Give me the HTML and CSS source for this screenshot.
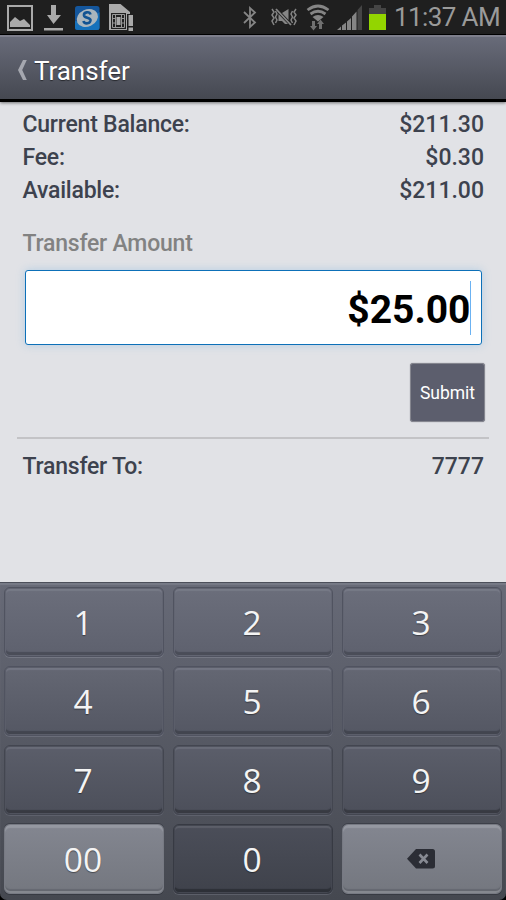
FILE: index.html
```html
<!DOCTYPE html>
<html lang="en">
<head>
<meta charset="utf-8">
<title>Transfer</title>
<link rel="stylesheet" href="styles.css">
</head>
<body>
<div class="screen">
  <div class="status">
    <svg class="status-icons" width="390" height="34" viewBox="0 0 390 34" aria-hidden="true">
      <g fill="#aaa">
        <path fill-rule="evenodd" d="M7 5H33V31H7ZM9 7V29H31V7Z"/>
        <path d="M10 27V22L15 17L20 21L24 19L30 25V27Z"/>
        <path d="M51 5H56V15H61L53.500 24L47 15H51ZM44 28H63V30.500H44Z"/>
      </g>
      <rect x="75" y="6" width="24.500" height="24" rx="2.500" fill="#14569c"/>
      <path d="M75 21Q90 23 99.500 12V27.500Q99.500 30 97 30H78Q75 30 75 27.500Z" fill="#1671bb"/>
      <ellipse cx="87.300" cy="18" rx="11" ry="8.500" fill="#aab5bd" transform="rotate(-25 87.300 18)"/>
      <path d="M90.500 14.500C89.500 11 83.500 12 84 15.500C84.500 18.500 91 17 90.500 20.500C89.500 24.500 84 24 83.500 21" fill="none" stroke="#125392" stroke-width="2.600"/>
      <path d="M109 4H120.500L130 12V14H127V30H109Z" fill="#aaa"/>
      <rect x="111" y="13" width="15" height="16" fill="#222"/>
      <path d="M112.500 14.500H124.500V27.500H112.500ZM115.500 15V27M121.500 15V27M112.500 18.500H115.500M112.500 23H115.500M121.500 18.500H124.500M121.500 23H124.500" fill="none" stroke="#999" stroke-width="1"/>
      <rect x="116.500" y="17" width="4" height="8" fill="#aaa"/>
      <path d="M128.500 15H133V26H128.500ZM128.500 27.500H133V31H128.500Z" fill="#aaa"/>
      <path d="M244 12L255 22.500L250 27V8L255 12.500L244 23" fill="none" stroke="#858585" stroke-width="1.800"/>
      <g stroke="#858585" stroke-width="1.500" fill="none">
        <path d="M272 9L274 12L272 15L274 18L272 21L274 25M275.500 11L277 14L275.500 17L277 20L275.500 23M296 9L294 12L296 15L294 18L296 21L294 25M292.500 11L291 14L292.500 17L291 20L292.500 23"/>
        <path d="M276 9L291 25" stroke-width="1.800"/>
      </g>
      <path d="M278.500 14L288 24H285L282 21H278.500ZM282 13L288.500 9V20Z" fill="#858585"/>
      <g fill="none" stroke="#858585" stroke-width="2.800">
        <path d="M307.500 10Q318 2 328.500 10M310.500 14Q318 8.500 325.500 14"/>
      </g>
      <path d="M312.500 17Q318 13 323.500 17L318 21.500Z" fill="#858585"/>
      <path d="M312 21H315V26H317L313.500 30.500L310 26H312ZM319 29V24H317L320.500 19.500L324 24H322V29Z" fill="#707070"/>
      <g fill="#858585">
        <path d="M337 30L341 26.500V30ZM342 25.500L346 22.500V30H342ZM347 21.500L351 18V30H347ZM352 16.500L356.500 11.500V30H352Z"/>
      </g>
      <path d="M357.500 10L362 5V30H357.500Z" fill="#454545"/>
      <path d="M374 5H381V8H386V15H369V8H374Z" fill="#454545"/>
      <rect x="369" y="14" width="17" height="16" fill="#93d500"/>
    </svg>
    <span class="clock">11:37 AM</span>
  </div>
  <header class="header">
    <svg width="11" height="22" viewBox="0 0 11 22" aria-hidden="true"><path d="M6 1H9.800L5.200 11L9.800 21H6L1 11Z" fill="#a5a7af"/></svg>
    <span class="title">Transfer</span>
  </header>
  <main class="content">
    <div class="row"><span>Current Balance:</span><span class="num">$211.30</span></div>
    <div class="row"><span>Fee:</span><span class="num">$0.30</span></div>
    <div class="row"><span>Available:</span><span class="num">$211.00</span></div>
    <div class="row muted">Transfer Amount</div>
    <div class="field"><span class="amount">$25.00</span><span class="caret"></span></div>
    <button class="submit">Submit</button>
    <div class="divider"></div>
    <div class="row to"><span>Transfer To:</span><span class="num">7777</span></div>
  </main>
  <div class="keypad">
    <div class="key r1">1</div><div class="key r1">2</div><div class="key r1">3</div>
    <div class="key r2">4</div><div class="key r2">5</div><div class="key r2">6</div>
    <div class="key r3">7</div><div class="key r3">8</div><div class="key r3">9</div>
    <div class="key light">00</div><div class="key r4">0</div>
    <div class="key light"><svg width="28" height="20" viewBox="0 0 28 20" aria-hidden="true"><path d="M9 0H25.500Q28 0 28 2.500V17Q28 19.500 25.500 19.500H9L0 9.750Z" fill="#2b2d35"/><path d="M12.500 5.500L20.500 14M20.500 5.500L12.500 14" stroke="#878a93" stroke-width="2.600"/></svg></div>
  </div>
</div>
</body>
</html>
```
FILE: styles.css
```css
* { box-sizing: border-box; }
body { margin: 0; background: #000; font-family: Roboto, "Liberation Sans", sans-serif; }
.screen { width: 506px; height: 900px; overflow: hidden; display: flex; flex-direction: column; background: #000; }
.status { height: 35px; flex: none; display: flex; background: #1f1f1f; border-bottom: 1px solid #000; }
.status-icons { flex: none; }
.clock { margin-left: 4px; font-size: 26px; line-height: 35px; color: #9a9a9a; white-space: nowrap; letter-spacing: -0.600px; }
.header { height: 67px; flex: none; display: flex; align-items: center; padding: 3px 0 0 17px; background: linear-gradient(#686b79, #454851); border-top: 2px solid #7e7f8c; border-bottom: 3px solid #000; box-shadow: 0 1px 3px rgba(0,0,0,.5); z-index: 1; }
.title { margin-left: 6px; padding-top: 2px; color: #fff; font-size: 26px; line-height: 30px; letter-spacing: -0.05px; text-shadow: 0 1px 1px rgba(0,0,0,.5); }
.content { height: 480px; flex: none; padding: 7px 17px 0; display: flex; flex-direction: column; background: #e1e2e6; }
.row { height: 33px; flex: none; padding: 0 5px 0 5.500px; display: flex; justify-content: space-between; font-size: 23px; font-weight: 500; line-height: 32px; letter-spacing: -0.22px; color: #3d424e; }
.num { letter-spacing: 0; }
.muted { margin-top: 20px; color: #828282; }
.field { height: 75px; flex: none; margin: 9px 7.500px 0; padding-right: 10px; display: flex; align-items: center; justify-content: flex-end; background: #fff; border: 1px solid #0d70b8; border-radius: 3px; box-shadow: 0 0 8px rgba(110,175,225,.4); }
.amount { padding-top: 4px; margin-right: -1px; font-size: 39px; font-weight: 700; color: #000; }
.caret { width: 1px; height: 54px; flex: none; background: #6bb2f2; }
.submit { align-self: flex-end; width: 75px; height: 59px; flex: none; margin: 18px 4px 0 0; padding: 0; background: #5c5e6d; border: 1px solid #85868f; border-radius: 3px; color: #fff; font: 400 17.500px Roboto, sans-serif; box-shadow: 0 0 1px #6c6d78; }
.divider { height: 2px; flex: none; margin-top: 15px; background: #c3c3c6; }
.to { margin-top: 11px; line-height: 33px; }
.keypad { flex: 1; display: grid; grid-template-columns: repeat(3, 160px); grid-template-rows: repeat(4, 70px); column-gap: 9px; row-gap: 9px; padding: 4px 0 0 4px; background: linear-gradient(#676a77, #454850); border-top: 1px solid #4c4f5a; border-radius: 0 0 7px 7px; box-shadow: inset 0 2px 1px #777b87; }
.key { display: flex; align-items: center; justify-content: center; padding: 0 2px 1px 0; border: 1px solid #505360; border-radius: 6px; color: #f4f4f4; font: 500 33.500px "Open Sans", "Noto Sans", sans-serif; box-shadow: inset 0 0 0 1px #626572, inset 0 3px 1px #777a87, inset 0 -4px 1px #4a4d58, 0 1px 0 #747783; text-shadow: 0 1px 1px rgba(0,0,0,.4); }
.r1 { background: linear-gradient(#6b6e7b, #5e616e); }
.r2 { background: linear-gradient(#646773, #545763); box-shadow: inset 0 0 0 1px #5b5e6a, inset 0 3px 1px #737683, inset 0 -4px 1px #42454f, 0 1px 0 #6a6d79; }
.r3 { background: linear-gradient(#5b5e6a, #4c4f5a); border-color: #434650; box-shadow: inset 0 0 0 1px #50535e, inset 0 3px 1px #696c78, inset 0 -4px 1px #383a42, 0 1px 0 #5e616c; }
.r4 { background: linear-gradient(#4b4e59, #3f424b); border-color: #373a43; box-shadow: inset 0 0 0 1px #444751, inset 0 3px 1px #5c5f69, inset 0 -4px 1px #2d3037, 0 1px 0 #5c5f69; }
.light { background: linear-gradient(#838690, #74777f); border-color: #777a83; box-shadow: inset 0 3px 1px #9598a1, inset 0 -2px 0 #85888f, inset 0 -4px 1px #656870, 0 1px 0 #373a42, 0 -1px 0 #3d4049; }
```
